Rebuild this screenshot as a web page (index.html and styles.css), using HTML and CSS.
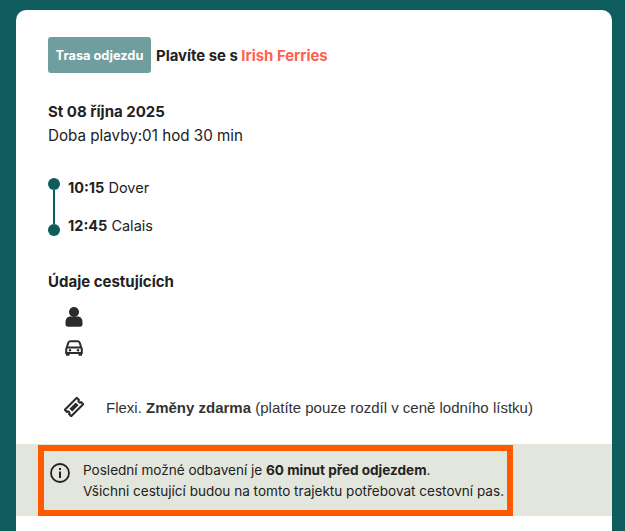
FILE: index.html
```html
<!DOCTYPE html>
<html lang="cs">
<head>
<meta charset="utf-8">
<title>Trasa odjezdu</title>
<link rel="stylesheet" href="styles.css">
</head>
<body>
<main class="card">
  <div class="body">
    <div class="head">
      <span class="badge">Trasa odjezdu</span>
      <span class="operator">Plavíte se s <span class="brand">Irish Ferries</span></span>
    </div>
    <div class="date">St 08 října 2025</div>
    <div class="duration">Doba plavby:01 hod 30 min</div>
    <div class="route">
      <div class="track"><i class="dot"></i><i class="line"></i><i class="dot"></i></div>
      <div class="stops">
        <div><b>10:15</b> Dover</div>
        <div><b>12:45</b> Calais</div>
      </div>
    </div>
    <h2 class="title">Údaje cestujících</h2>
    <div class="icons">
      <svg class="ic" width="18" height="20" viewBox="0 0 18 20"><circle cx="9" cy="5" r="5" fill="#2b2b2b"/><path d="M.5 15.500c0-4 2-6 5-6h7c3 0 5 2 5 6v1.800c0 1.500-1 2.500-2.500 2.500h-12C1.500 19.800.5 18.800.5 17.300z" fill="#2b2b2b"/></svg>
      <svg class="ic" width="18" height="16" viewBox="0 0 18 16"><path d="M1.800 7.500l1.400-4.500c.3-1 1-1.800 2-1.800h7.600c1 0 1.700.8 2 1.800l1.400 4.500M1.200 13V9c0-1 .7-1.600 1.600-1.600h12.400c.9 0 1.600.6 1.600 1.600v4z" fill="none" stroke="#2b2b2b" stroke-width="2"/><path d="M1 13h3.500v2.800H1zM13.500 13H17v2.800h-3.500z" fill="#2b2b2b"/><circle cx="5" cy="10.300" r="1.200" fill="#2b2b2b"/><circle cx="13" cy="10.300" r="1.200" fill="#2b2b2b"/></svg>
    </div>
    <div class="flexi">
      <svg class="ticket" width="20" height="20" viewBox="0 0 20 20"><g transform="rotate(-45 10 10)"><path d="M1.500 5.500h17v3a1.500 1.500 0 0 0 0 3v3h-17v-3a1.500 1.500 0 0 0 0-3z" fill="none" stroke="#2b2b2b" stroke-width="2" stroke-linejoin="round"/><rect x="5.500" y="8" width="9" height="4" fill="#2b2b2b"/></g></svg>
      <span>Flexi. <b>Změny zdarma</b> (platíte pouze rozdíl v ceně lodního lístku)</span>
    </div>
  </div>
  <div class="strip">
    <div class="notice">
      <svg class="info" width="22" height="22" viewBox="0 0 22 22"><circle cx="11" cy="11" r="9" fill="none" stroke="#222" stroke-width="1.800"/><rect x="10" y="9.500" width="2" height="6.500" fill="#222"/><rect x="10" y="6" width="2" height="2" fill="#222"/></svg>
      <p>Poslední možné odbavení je <b>60 minut před odjezdem</b>.<br>Všichni cestující budou na tomto trajektu potřebovat cestovní pas.</p>
    </div>
  </div>
</main>
</body>
</html>
```
FILE: styles.css
```css
html, body {
  margin: 0;
  height: 531px;
  overflow: hidden;
  background: #0f5c5e;
}
body {
  padding: 10px 13px 0 16px;
  box-sizing: border-box;
  font-family: "Inter", "Liberation Sans", sans-serif;
  color: #222;
}
.card {
  background: #fff;
  border-radius: 10px 10px 0 0;
  height: 521px;
}
.body {
  padding: 27px 32px 0;
  height: 434px;
  box-sizing: border-box;
}
.head {
  display: flex;
  align-items: center;
  gap: 5px;
}
.badge {
  background: #709d9e;
  color: #fff;
  font-size: 12.800px;
  font-weight: 700;
  width: 103px;
  height: 36px;
  border-radius: 3px;
  display: flex;
  align-items: center;
  justify-content: center;
}
.operator {
  font-size: 14.900px;
  font-weight: 700;
  padding-top: 1px;
}
.brand { color: #ff5f50; }
.date {
  font-size: 15px;
  font-weight: 700;
  line-height: 20px;
  margin-top: 29px;
}
.duration {
  font-size: 15.200px;
  line-height: 20px;
  margin-top: 4px;
}
.route {
  display: flex;
  gap: 8px;
  margin-top: 32px;
}
.track {
  width: 12px;
  height: 58px;
  display: flex;
  flex-direction: column;
  align-items: center;
}
.dot {
  width: 12px;
  height: 12px;
  border-radius: 50%;
  background: #0f5c5e;
  flex: none;
}
.line {
  width: 2px;
  flex: 1;
  background: #0f5c5e;
}
.stops {
  font-size: 14.500px;
  line-height: 20px;
  display: flex;
  flex-direction: column;
  gap: 18px;
}
.title {
  font-size: 15px;
  font-weight: 700;
  line-height: 20px;
  margin: 36px 0 0;
}
.icons {
  display: flex;
  flex-direction: column;
  align-items: flex-start;
  gap: 13px;
  margin: 15px 0 0 17px;
}
.ic { display: block; }
.flexi {
  display: flex;
  align-items: center;
  gap: 22px;
  margin: 41px 0 0 16px;
  font-family: "Liberation Sans", Arial, sans-serif;
  font-size: 15px;
  color: #333;
}
.ticket { flex: none; }
.strip {
  background: #e3e6dc;
  height: 72px;
  padding: 1px 0 0 22px;
  box-sizing: border-box;
}
.notice {
  width: 475px;
  height: 71px;
  box-sizing: border-box;
  border: 6px solid #ff5a00;
  display: flex;
  align-items: flex-start;
  gap: 12px;
  padding: 9px 0 0 5px;
}
.notice p {
  margin: 0;
  font-size: 13.550px;
  line-height: 21px;
}
.info { flex: none; margin-top: 2px; }
```
